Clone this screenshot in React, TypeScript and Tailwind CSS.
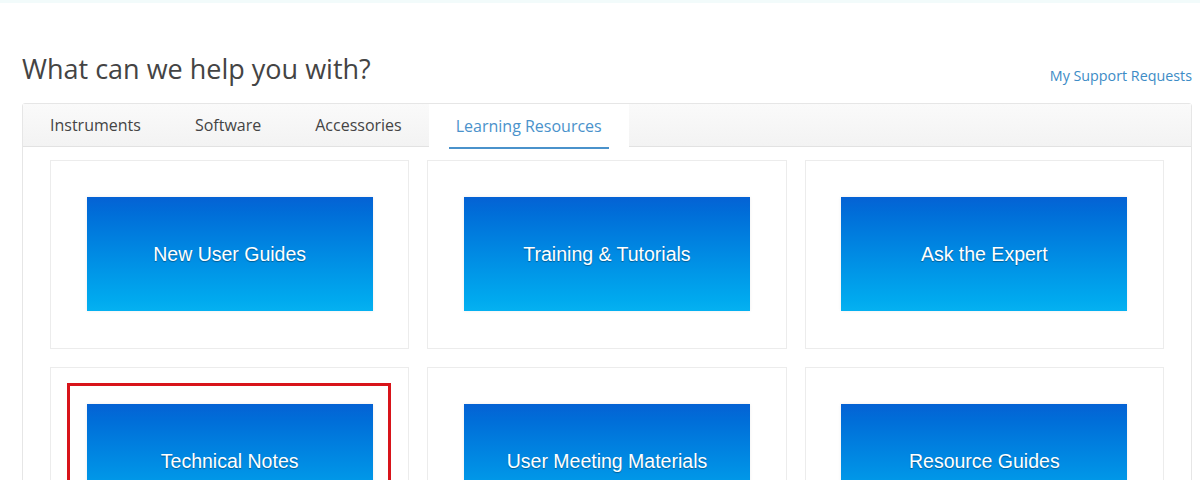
import React from "react";

const cards = [
  "New User Guides",
  "Training & Tutorials",
  "Ask the Expert",
  "Technical Notes",
  "User Meeting Materials",
  "Resource Guides",
];

const tabs = ["Instruments", "Software", "Accessories"];

export default function App() {
  return (
    <div className="w-[1200px] h-[480px] overflow-hidden bg-white font-['Open_Sans',sans-serif]">
      <div className="h-[3px] bg-[#f2fbfb]" />
      <div className="flex items-end justify-between pl-[22px] pr-[8px] pt-[47px]">
        <h1 className="text-[27px] leading-[38px] text-[#444] font-normal">What can we help you with?</h1>
        <a className="text-[14.3px] leading-[20px] text-[#3d8cc6] mb-[2px]">My Support Requests</a>
      </div>
      <div className="ml-[22px] mr-[8px] mt-[15px] border border-[#e6e6e6] rounded-t-[3px]">
        <div className="flex h-[43px] bg-gradient-to-b from-[#fafafa] to-[#f3f3f3] border-b border-[#e2e2e2]">
          {tabs.map((t) => (
            <div key={t} className="px-[27px] flex items-center text-[16px] text-[#444]">
              {t}
            </div>
          ))}
          <div className="relative px-[27px] flex items-center text-[16px] text-[#4a92cb] bg-white h-[44px]">
            Learning Resources
            <div className="absolute left-[20px] right-[20px] bottom-[-1px] h-[2px] bg-[#4a92cb]" />
          </div>
        </div>
        <div className="grid grid-cols-3 gap-x-[18px] gap-y-[18px] px-[27px] pt-[13px] pb-[20px] bg-white">
          {cards.map((c, i) => (
            <div
              key={c}
              className="relative h-[189px] border border-[#ececec] bg-white flex items-start justify-center pt-[36px]"
            >
              <div className="w-[286px] h-[114px] bg-gradient-to-b from-[#0562d4] to-[#05b1f1] flex items-center justify-center shadow-[0_0_3px_rgba(0,0,0,0.08)]">
                <span className="font-['Liberation_Sans',Arial,sans-serif] text-[19.5px] text-white pt-[2px] [text-shadow:0_1px_1px_rgba(0,0,0,0.35)]">
                  {c}
                </span>
              </div>
              {i === 3 && (
                <div className="absolute left-[16px] top-[15px] w-[324px] h-[156px] border-[3px] border-[#d8141a]" />
              )}
            </div>
          ))}
        </div>
      </div>
    </div>
  );
}
